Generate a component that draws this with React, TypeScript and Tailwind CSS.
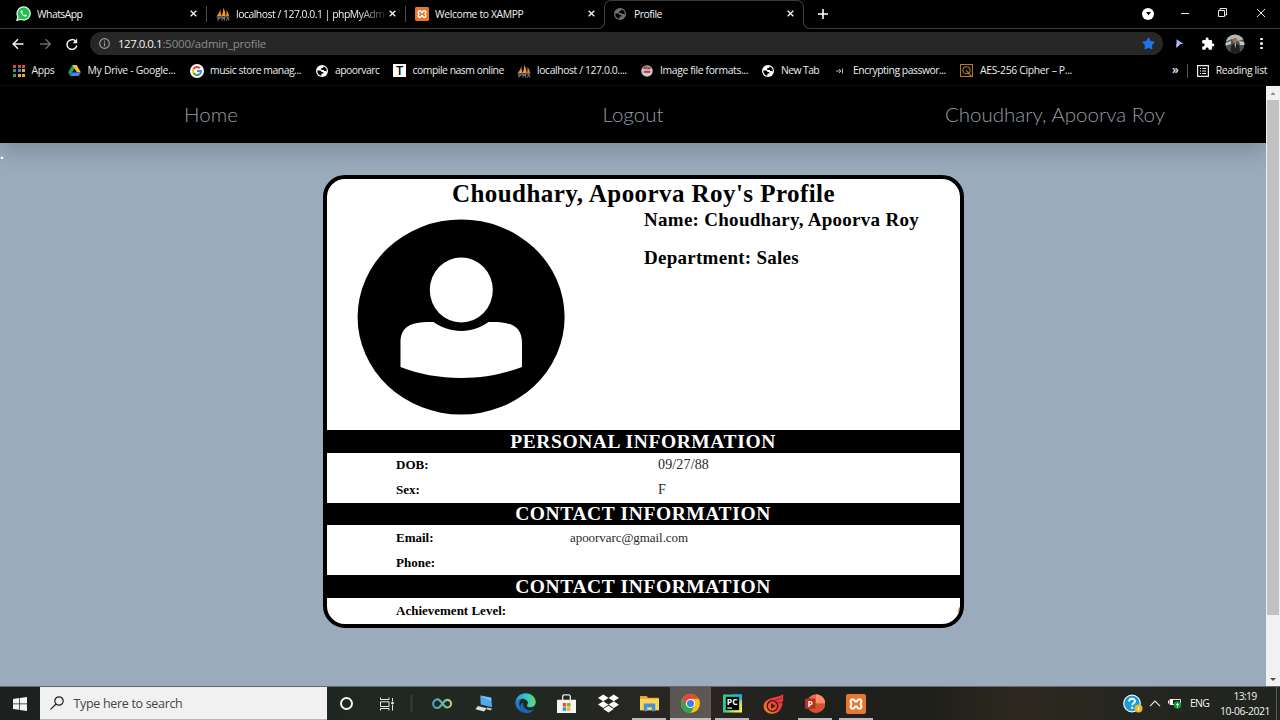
import React from "react";
import { FaDropbox, FaStar } from "react-icons/fa";
import { MdExtension } from "react-icons/md";

type IconProps = { className?: string };

/* ---------- site icons ---------- */

function WhatsAppIcon() {
  return (
    <svg viewBox="0 0 16 16" className="size-[15px] shrink-0">
      <path d="M8.200 1a7 7 0 0 1 0 14c-1.200 0-2.300-.3-3.300-.8L1 15.200l1.100-3.700A7 7 0 0 1 8.200 1z" fill="#1fc14f" stroke="#f2fff5" strokeWidth="1.300" />
      <path d="M5.300 4.600c-.8.8-.7 2 .3 3.500 1.100 1.600 2.400 2.700 3.900 3.100 1 .2 1.900-.2 2.200-1.200l-1.900-1.100-.9.900c-1.100-.5-1.800-1.200-2.300-2.200l.7-.9-.8-1.900z" fill="#fff" />
    </svg>
  );
}

function PmaIcon({ className }: IconProps) {
  return (
    <svg viewBox="0 0 14 14" className={className}>
      <path d="M.8 9C2.800 6.800 3.800 4.800 4.200 2l1 7zM5.200 9C7 6 7.400 3.500 7.200.4 8.800 3.300 9.600 6 9.600 9z" fill="#f29a1e" />
      <path d="M9.900 9c.6-1.700.8-3.500.5-6 1.500 1.800 2.400 3.700 2.700 6z" fill="#e08a1c" />
      <path d="M.6 9.900h12.800M2 9.900v3.800M2 11.700h2v-1.800M6 13.600V10l1.300 2 1.300-2v3.600M10.500 13.600l1.200-3.500 1.300 3.500" fill="none" stroke="#8b8ca6" strokeWidth=".9" />
    </svg>
  );
}

function XamppIcon({ className }: IconProps) {
  return (
    <svg viewBox="0 0 20 20" className={className}>
      <rect width="20" height="20" rx="2" fill="#e8772e" />
      <path
        d="M7 5.200c1.700 0 1.700 2.600 3 2.600s1.300-2.600 3-2.600 2.700 1.300 2.400 2.800c-.2 1-.9 1.400-.9 2s.7 1 .9 2c.3 1.500-.7 2.800-2.400 2.800s-1.700-2.600-3-2.600-1.300 2.600-3 2.600-2.700-1.300-2.400-2.800c.2-1 .9-1.400.9-2s-.7-1-.9-2C4.300 6.500 5.300 5.200 7 5.200z"
        fill="none"
        stroke="#fff"
        strokeWidth="2"
      />
    </svg>
  );
}

function GlobeIcon({ className }: IconProps) {
  return (
    <svg viewBox="0 0 12 12" className={className}>
      <circle cx="6" cy="6" r="6" fill="currentColor" />
      <path
        d="M1.300 5.500h2.500c1 0 1.600.6 1.600 1.400h1.200c.6 0 .8.4.8 1v.6H6.200c-.5 0-.8.3-.8.800v1.400A4.800 4.800 0 0 1 1.300 5.500zM7.400 1.400v.5c0 .7-.5 1-1.100 1-.9 0-1.200.4-1.200 1s.4 1 1 1h1c.6 0 1 .4 1 1h1.500c.6 0 .9.4 1 1A4.800 4.800 0 0 0 7.400 1.400z"
        fill="#000"
      />
    </svg>
  );
}

function AppsIcon() {
  const colors = ["#d34b40", "#d34b40", "#d34b40", "#3f9c56", "#3f7fe0", "#e0b030", "#3f9c56", "#e0b030", "#e0b030"];
  return (
    <span className="grid shrink-0 grid-cols-3 gap-[1.5px]">
      {colors.map((c, i) => (
        <span key={i} className="size-[3px]" style={{ backgroundColor: c }} />
      ))}
    </span>
  );
}

function DriveIcon() {
  return (
    <svg viewBox="0 0 24 21" className="h-[11px] w-[13px] shrink-0">
      <path d="M8 0h8l-8 14-4 7-4-7z" fill="#1fa463" />
      <path d="M8 0h8l8 14h-8z" fill="#fbc31c" />
      <path d="M4 21l4-7h16l-4 7z" fill="#4285f4" />
      <path d="M12 7l4 7H8z" fill="#000" />
    </svg>
  );
}

function GoogleIcon() {
  return (
    <svg viewBox="0 0 28 28" className="size-[14px] shrink-0">
      <circle cx="14" cy="14" r="14" fill="#fff" />
      <g fill="none" strokeWidth="4">
        <path d="M19.800 8.500A8 8 0 0 0 7 10.200" stroke="#ea4335" />
        <path d="M7 10.200a8 8 0 0 0 0 7.600" stroke="#fbbc05" />
        <path d="M7 17.800a8 8 0 0 0 12.500 2" stroke="#34a853" />
        <path d="M19.500 19.800A8 8 0 0 0 22 14.200h-8" stroke="#4285f4" />
      </g>
    </svg>
  );
}

function ImageSiteIcon() {
  return (
    <svg viewBox="0 0 12 12" className="size-[12px] shrink-0">
      <circle cx="6" cy="6" r="5.800" fill="#b4b8c6" />
      <path d="M2.500 1.500h3v3h-3zM6.500 2h3v3h-3zM3 5.500h6v2.300H3z" fill="#c23a2a" />
      <path d="M1.500 8.300L6 10.300l4.500-2M1.200 5h9.600" fill="none" stroke="#f4ece8" strokeWidth=".9" />
      <path d="M5.900 1v3.500" stroke="#445a9c" strokeWidth="1" />
    </svg>
  );
}

function QIcon() {
  return (
    <svg viewBox="0 0 14 14" className="size-[13px] shrink-0" fill="none" stroke="#b57a36" strokeWidth="1.100">
      <path d="M.6.600h12.800v12.800H.6z" />
      <circle cx="7" cy="6.700" r="3.800" />
      <path d="M6.500 6.500l5.500 6.500" strokeWidth="1.200" />
    </svg>
  );
}

/* ---------- browser chrome ---------- */

function CloseIcon() {
  return (
    <svg viewBox="0 0 8 8" className="size-[7px] shrink-0" stroke="#f5f5f5" strokeWidth="1.500">
      <path d="M.8.800l6.400 6.400M7.200.800L.8 7.200" />
    </svg>
  );
}

function Tab({ icon, children, text }: { icon: React.ReactNode; children: React.ReactNode; text: string }) {
  return (
    <div className="flex min-w-0 flex-1 items-center">
      {icon}
      <span className={"pt-px " + text}>{children}</span>
      <span className="ml-auto pr-[9px]">
        <CloseIcon />
      </span>
    </div>
  );
}

function TabStrip() {
  return (
    <div className="flex h-[29px] text-[10.4px] text-[#f1f1f1]">
      <div className="flex w-[598px] shrink-0 border-b border-[#3c3c3c]">
        <div className="flex w-[207px] shrink-0 items-center pl-[16px]">
          <Tab icon={<WhatsAppIcon />} text="ml-[6px] tracking-[-0.53px]">WhatsApp</Tab>
          <span className="h-[16px] w-px bg-[#4a4a4a]" />
        </div>
        <div className="flex w-[199px] shrink-0 items-center pl-[9px]">
          <Tab
            icon={<PmaIcon className="size-[14px] shrink-0" />}
            text="ml-[6px] whitespace-nowrap tracking-[-0.48px] [mask-image:linear-gradient(to_right,#000_82%,rgb(0_0_0/0.15))]"
          >
            localhost / 127.0.0.1 | phpMyAdm
          </Tab>
          <span className="h-[16px] w-px bg-[#4a4a4a]" />
        </div>
        <div className="-mr-[6px] flex w-[198px] shrink-0 items-center pl-[9px]">
          <Tab icon={<XamppIcon className="size-[14px] shrink-0" />} text="ml-[6px] tracking-[-0.38px]">Welcome to XAMPP</Tab>
        </div>
      </div>
      <div className="h-[8px] w-[7px] self-end rounded-br-[7px] border-r border-b border-[#3c3c3c]" />
      <div className="-ml-px flex h-[22px] w-[200px] rounded-t-[7px] border-x border-t border-[#3c3c3c]">
        <div className="flex h-[26px] flex-1 items-center pl-[9px]">
          <Tab icon={<GlobeIcon className="size-[12px] shrink-0 text-[#6b6f75]" />} text="ml-[8px] tracking-[-0.48px]">Profile</Tab>
        </div>
      </div>
      <div className="-ml-px h-[8px] w-[8px] self-end rounded-bl-[7px] border-b border-l border-[#3c3c3c]" />
      <div className="flex flex-1 items-center border-b border-[#3c3c3c]">
        <svg viewBox="0 0 10 10" className="ml-[7px] size-[10px]" stroke="#fff" strokeWidth="1.600">
          <path d="M5 0v10M0 5h10" />
        </svg>
        <div className="ml-auto flex items-center pr-[15px]">
          <span className="mr-[27px] flex size-[12px] items-center justify-center rounded-full bg-white">
            <svg viewBox="0 0 6 4" className="w-[5px]"><path d="M0 0h6L3 4z" fill="#000" /></svg>
          </span>
          <svg viewBox="0 0 84 10" className="-mt-[3px] h-[10px] w-[84px]" fill="none" stroke="#e8e8e8" strokeWidth="1">
            <path d="M0 5.500h8M37.500 2.500h6v6h-6zM39 2.500v-2h6.500v6.500h-2M76 1l8 8M84 1l-8 8" />
          </svg>
        </div>
      </div>
    </div>
  );
}

function Toolbar() {
  return (
    <div className="flex h-[29px] items-center">
      <svg viewBox="0 0 66 12" className="ml-[12px] h-[12px] w-[66px]" fill="none" strokeWidth="1.500">
        <path d="M11.500 6H1.200M6 1.200L1.200 6 6 10.800" stroke="#f5f5f5" />
        <path d="M28 6h10M33.500 1.200L38.300 6l-4.800 4.800" stroke="#6a6a6a" />
        <path d="M63.600 3.200A4.900 4.900 0 1 0 64.800 7.500" stroke="#f5f5f5" />
        <path d="M65.200.6v4.600h-4.600z" fill="#f5f5f5" />
      </svg>
      <div className="ml-[12px] flex h-[23px] w-[1073px] items-center rounded-full bg-[#272727] pr-[8px] pl-[9px] text-[11.5px]">
        <svg viewBox="0 0 12 12" className="size-[11px]" fill="none" stroke="#9aa0a6" strokeWidth="1.200">
          <circle cx="6" cy="6" r="5.300" />
          <path d="M6 5.300v3.600M6 3v1.300" />
        </svg>
        <span className="ml-[8px] tracking-[-0.5px] text-[#f4f4f4]">127.0.0.1</span>
        <span className="ml-[0.5px] tracking-[-0.2px] text-[#8c8c8c]">:5000/admin_profile</span>
        <FaStar className="ml-auto size-[13px] text-[#1f73e8]" />
      </div>
      <svg viewBox="0 0 8 9" className="ml-[13px] h-[9px] w-[8px]">
        <path d="M.5.300L7.500 4.800 4 5.300.5 8.800z" fill="#8fbdf2" />
        <path d="M4 5.300L.5 8.800V5z" fill="#e9b6ec" />
      </svg>
      <MdExtension className="ml-[17px] size-[14px] text-white" />
      <svg viewBox="0 0 20 20" className="ml-[10px] size-[20px]">
        <defs>
          <clipPath id="avatar"><circle cx="10" cy="10" r="9.500" /></clipPath>
        </defs>
        <g clipPath="url(#avatar)">
          <path d="M0 0h20v20H0z" fill="#4c534f" />
          <path d="M0 0h20v5L13 7 7 5 0 8z" fill="#a9bcae" />
          <path d="M0 9l6-2v3l-6 2zM14 7l6 1v3h-5z" fill="#c3c6c6" />
          <path d="M5 20l1.500-9L10 9l4 2 1.500 9z" fill="#1c2022" />
          <circle cx="10" cy="6.500" r="2.500" fill="#9a6e58" />
          <path d="M9.500 9.500h1.500l-.7 5z" fill="#d6dbe2" />
        </g>
      </svg>
      <div className="ml-[15px] flex flex-col gap-[2px]">
        <span className="size-[2.5px] rounded-full bg-white" />
        <span className="size-[2.5px] rounded-full bg-white" />
        <span className="size-[2.5px] rounded-full bg-white" />
      </div>
    </div>
  );
}

function Bookmark({ icon, className, children }: { icon: React.ReactNode; className: string; children: string }) {
  return (
    <div className={"flex shrink-0 items-center whitespace-nowrap " + className}>
      {icon}
      <span>{children}</span>
    </div>
  );
}

function BookmarksBar() {
  return (
    <div className="flex h-[27px] items-center pb-px pl-[13px] text-[10.4px] text-[#ececec]">
      <Bookmark icon={<AppsIcon />} className="w-[55px] gap-[6.5px] tracking-[-0.33px]">Apps</Bookmark>
      <Bookmark icon={<DriveIcon />} className="w-[122px] gap-[6.5px] tracking-[-0.29px]">My Drive - Google...</Bookmark>
      <Bookmark icon={<GoogleIcon />} className="w-[126px] gap-[6px] tracking-[-0.47px]">music store manag...</Bookmark>
      <Bookmark icon={<GlobeIcon className="size-[12px] shrink-0 text-white" />} className="w-[77px] gap-[7px] tracking-[-0.52px]">apoorvarc</Bookmark>
      <Bookmark
        icon={<span className="flex size-[13px] items-center justify-center bg-white font-['Roboto'] text-[12px] font-medium text-black">T</span>}
        className="w-[124px] gap-[6.5px] tracking-[-0.48px]"
      >
        compile nasm online
      </Bookmark>
      <Bookmark icon={<PmaIcon className="size-[14px] shrink-0" />} className="w-[124px] gap-[6px] tracking-[-0.4px]">localhost / 127.0.0....</Bookmark>
      <Bookmark icon={<ImageSiteIcon />} className="w-[121px] gap-[7px] tracking-[-0.38px]">Image file formats...</Bookmark>
      <Bookmark icon={<GlobeIcon className="size-[12px] shrink-0 text-white" />} className="w-[74px] gap-[7px] tracking-[-0.6px]">New Tab</Bookmark>
      <Bookmark
        icon={
          <svg viewBox="0 0 7 6" className="h-[6px] w-[7px]" fill="none" stroke="#b5b5b5">
            <path d="M0 3h5M3 1l2 2-2 2M6.500.500v5" />
          </svg>
        }
        className="w-[124px] gap-[10px] tracking-[-0.47px]"
      >
        Encrypting passwor...
      </Bookmark>
      <Bookmark icon={<QIcon />} className="w-[212px] gap-[7px] tracking-[-0.33px]">AES-256 Cipher – P...</Bookmark>
      <span className="-mt-[3px] text-[12px] leading-none font-semibold">»</span>
      <span className="ml-[8px] h-[14px] w-px bg-[#555]" />
      <svg viewBox="0 0 12 12" className="ml-[9px] size-[12px]" fill="none" stroke="#f0f0f0" strokeWidth="1.200">
        <path d="M.6.600h10.800v10.800H.6zM3 3.500h1M5.200 3.500h4M3 6h1M5.200 6h4M3 8.500h1M5.200 8.500h4" />
      </svg>
      <span className="ml-[7px] tracking-[-0.35px] whitespace-nowrap">Reading list</span>
    </div>
  );
}

/* ---------- page ---------- */

function NavBar() {
  return (
    <nav className="relative flex h-[57px] items-center bg-black font-['Lato'] text-[20.5px] font-light text-[#949ca6] shadow-[0_7px_24px_rgba(0,0,0,0.2)]">
      <a className="flex-1 text-center">Home</a>
      <a className="flex-1 text-center">Logout</a>
      <a className="flex-1 text-center">Choudhary, Apoorva Roy</a>
    </nav>
  );
}

function UserAvatar() {
  return (
    <svg viewBox="0 0 208 196" className="mt-[40px] ml-[30px] h-[196px] w-[209px]">
      <ellipse cx="103.600" cy="98" rx="103.500" ry="97.500" fill="#000" />
      <ellipse cx="103.800" cy="71" rx="31.500" ry="32.500" fill="#fff" />
      <path
        d="M76 103C84 108.500 93 112 103.800 112S123 108.500 131 103C152 102.500 164.500 106 164.500 124V148C146 155 126 159 103.800 159S61 155 43 148V124C43 106 55 102.500 76 103z"
        fill="#fff"
      />
    </svg>
  );
}

function SectionTitle({ children, className }: { children: string; className: string }) {
  return (
    <h2 className={"flex items-center justify-center bg-black text-[19.5px] leading-none font-bold text-white " + className}>
      {children}
    </h2>
  );
}

type RowProps = { label: string; value?: string; className?: string; labelClass?: string; valueClass?: string };

function Row({ label, value, className = "", labelClass = "w-[262px]", valueClass = "" }: RowProps) {
  return (
    <div className={"flex h-[25px] items-center pl-[69.5px] text-[13px] " + className}>
      <span className={"shrink-0 font-bold " + labelClass}>{label}</span>
      <span className={"text-[#2a2a2a] " + valueClass}>{value}</span>
    </div>
  );
}

function ProfileCard() {
  return (
    <section className="mx-auto mt-[32px] h-[453px] w-[641px] overflow-hidden rounded-[22px] border-4 border-black bg-white font-['Liberation_Serif'] text-black">
      <div className="flex h-[251px]">
        <div className="w-[317.500px] shrink-0">
          <UserAvatar />
        </div>
        <div className="flex flex-col">
          <h1 className="-ml-[192px] h-[29px] text-[25px] leading-[30px] font-bold tracking-[0.437px] whitespace-nowrap">
            Choudhary, Apoorva Roy's Profile
          </h1>
          <p className="h-[37.5px] text-[19px] leading-[23px] font-bold tracking-[0.283px] whitespace-nowrap">Name: Choudhary, Apoorva Roy</p>
          <p className="text-[19px] leading-[23px] font-bold tracking-[0.27px]">Department: Sales</p>
        </div>
      </div>
      <SectionTitle className="h-[23px] tracking-[0.6px]">PERSONAL INFORMATION</SectionTitle>
      <Row label="DOB:" value="09/27/88" className="pb-[2px]" valueClass="text-[14px] tracking-[0.15px]" />
      <Row label="Sex:" value="F" className="pb-[2px]" valueClass="text-[14px]" />
      <SectionTitle className="h-[22px] tracking-[0.6px]">CONTACT INFORMATION</SectionTitle>
      <Row label="Email:" value="apoorvarc@gmail.com" labelClass="w-[174px]" valueClass="tracking-[-0.06px]" />
      <Row label="Phone:" />
      <SectionTitle className="h-[23px] tracking-[0.6px]">CONTACT INFORMATION</SectionTitle>
      <Row label="Achievement Level:" value="0" labelClass="w-[562px]" />
    </section>
  );
}

function ScrollBar() {
  return (
    <div className="flex w-[14px] flex-col items-center bg-[#f1f1f1]">
      <svg viewBox="0 0 14 14" className="size-[14px] shrink-0"><path d="M4.500 9h5L7 6z" fill="#8d8d8d" /></svg>
      <div className="h-[515px] w-[12px] bg-[#c1c1c1]" />
      <svg viewBox="0 0 14 14" className="mt-auto size-[14px] shrink-0"><path d="M4 6h6L7 9z" fill="#505050" /></svg>
    </div>
  );
}

/* ---------- taskbar ---------- */

function TaskItem({ children, bar = "", cell = "" }: { children: React.ReactNode; bar?: string; cell?: string }) {
  return (
    <div className={"flex h-full w-[41.35px] shrink-0 flex-col items-center " + cell}>
      <div className="flex flex-1 items-center">{children}</div>
      <span className={"-mt-[2px] h-[2px] " + bar} />
    </div>
  );
}

function InfinityIcon() {
  return (
    <svg viewBox="0 0 22 14" className="w-[21px]" fill="none" strokeWidth="2.200">
      <defs>
        <linearGradient id="inf"><stop stopColor="#4b9fc4" /><stop offset=".5" stopColor="#62b8ae" /><stop offset="1" stopColor="#a8d08a" /></linearGradient>
      </defs>
      <path d="M11 7C9 4 7.700 2.500 5.700 2.500a4.500 4.500 0 0 0 0 9C7.700 11.500 9 10 11 7s3.300-4 5-4a3.900 3.900 0 0 1 0 8C14 11 13 10 11 7z" stroke="url(#inf)" />
    </svg>
  );
}

function ComputerIcon() {
  return (
    <svg viewBox="0 0 20 18" className="w-[19px]">
      <path d="M5.500.5l11.500 2.500 1 10-12-3z" fill="#4fa9ec" />
      <path d="M5.500.5l11.500 2.500.3 3.500z" fill="#7cc4f6" />
      <path d="M3 11.500l9.500 2.500-3 3.500L.5 15z" fill="#d8dde2" />
      <path d="M12.500 12.800l5.500 1.400-1.500 2-4-1z" fill="#b8bfc6" />
    </svg>
  );
}

function EdgeIcon() {
  return (
    <svg viewBox="0 0 24 24" className="w-[21px]">
      <defs>
        <linearGradient id="edgeTop" x1="0" x2="1"><stop stopColor="#2a9fe0" /><stop offset=".55" stopColor="#35c6cf" /><stop offset="1" stopColor="#5fdc62" /></linearGradient>
        <linearGradient id="edgeLow" x1="0" y1="0" x2="1" y2="1"><stop stopColor="#1e8fe0" /><stop offset="1" stopColor="#114a9a" /></linearGradient>
      </defs>
      <path d="M.4 11C1.200 4.600 6 .3 12 .3c7 0 11.700 5 11.700 10 0 4-3 6-6.200 6-2.500 0-4-.8-4-1.800 0-.8 1.200-1.200 1.200-3.200 0-2.700-3-4.800-6.500-4.800-3.800 0-6.500 1.900-7.800 4.500z" fill="url(#edgeTop)" />
      <path d="M.4 11C2 7.500 5 6.400 8 6.500c-2.500 1.300-3.500 4-3 7 .8 5 5.500 9 11 8.800A12 12 0 0 1 .4 11z" fill="url(#edgeLow)" />
      <path d="M9.500 11c-1.200 5 3.200 9 8 8.600 1.800-.2 3-.8 4.500-1.600-1.500 2.500-4 4.300-7 5C9.500 23.500 5.600 18.500 6 14.500c.2-1.700 1.500-3 3.500-3.500z" fill="#1668b8" />
    </svg>
  );
}

function StoreIcon() {
  return (
    <svg viewBox="0 0 20 21" className="w-[19px]">
      <path d="M6 7V2.500A1.500 1.500 0 0 1 7.500 1h5A1.500 1.500 0 0 1 14 2.500V7" fill="none" stroke="#e8e8e8" strokeWidth="1.400" />
      <path d="M0 6h20v13.500A1.500 1.500 0 0 1 18.500 21h-17A1.500 1.500 0 0 1 0 19.500z" fill="#f4f4f4" />
      <path d="M6 9.500h3.700v3.700H6z" fill="#e8502a" />
      <path d="M10.500 9.500h3.700v3.700h-3.700z" fill="#7cb518" />
      <path d="M6 14h3.700v3.700H6z" fill="#1d9fe4" />
      <path d="M10.500 14h3.700v3.700h-3.700z" fill="#f8b50c" />
    </svg>
  );
}

function FolderIcon() {
  return (
    <svg viewBox="0 0 20 17" className="w-[19px]">
      <path d="M0 1h7l1.500 2H20v13H0z" fill="#e9a820" />
      <path d="M0 4h20v12H0z" fill="#fbd35f" />
      <path d="M4 17V9h12v8h-3.500v-4h-5v4z" fill="#3f93d6" />
    </svg>
  );
}

function ChromeIcon() {
  return (
    <svg viewBox="0 0 20 20" className="w-[19px]">
      <circle cx="10" cy="10" r="10" fill="#fbc116" />
      <path d="M1.340 5A10 10 0 0 1 18.660 5H10L5.670 12.500z" fill="#e0483a" />
      <path d="M1.340 5A10 10 0 0 0 10 20l4.330-7.500L10 14l-4.330-1.500z" fill="#2fa552" />
      <circle cx="10" cy="10" r="4.800" fill="#fff" />
      <circle cx="10" cy="10" r="3.700" fill="#3f7de8" />
    </svg>
  );
}

function PyCharmIcon() {
  return (
    <svg viewBox="0 0 20 20" className="w-[19px]">
      <defs>
        <linearGradient id="pc" x1="0" y1="0" x2="1" y2="1"><stop stopColor="#21d789" /><stop offset=".5" stopColor="#2cc7a0" /><stop offset=".75" stopColor="#d7ea45" /><stop offset="1" stopColor="#fcf84a" /></linearGradient>
      </defs>
      <path d="M0 .5h20v19H0z" fill="url(#pc)" />
      <path d="M10 .5h10v6l-5-2z" fill="#18b8d8" />
      <path d="M3 3h14v14H3z" fill="#000" />
      <path d="M4.500 14.800h5" stroke="#fff" strokeWidth="1.200" />
      <text x="4" y="11.300" fontSize="9" fontWeight="700" fontFamily="Open Sans, sans-serif" fill="#fff">PC</text>
    </svg>
  );
}

function FlameIcon() {
  return (
    <svg viewBox="0 0 21 20" className="w-[21px]">
      <defs>
        <linearGradient id="fl" x1="0" y1="1" x2="1" y2="0"><stop stopColor="#f7931e" /><stop offset=".5" stopColor="#ee4035" /><stop offset="1" stopColor="#f0304a" /></linearGradient>
      </defs>
      <path d="M20.500 0c-.8 3 0 5-.5 7l-1.500 2 1 .5c-.3 2.500-1 4.500-3 7-3 3.500-9 4.500-13 1.500C-.5 15-.3 9.500 3.500 6.500 8 3 15 3.500 20.500 0z" fill="url(#fl)" />
      <circle cx="9.500" cy="12" r="5.300" fill="none" stroke="#33201c" strokeWidth="1.300" />
      <path d="M8 9.300l4.500 2.700L8 14.700z" fill="#33201c" />
      <path d="M12 6.500l7-2.500M14.500 9l4-1" stroke="#7d1f1c" strokeWidth=".8" />
    </svg>
  );
}

function PowerPointIcon() {
  return (
    <svg viewBox="0 0 20 19" className="w-[20px]">
      <circle cx="11" cy="9.500" r="9.200" fill="#ed6c47" />
      <path d="M11 .3a9.200 9.200 0 0 1 9.200 9.200H11z" fill="#ff8f6b" />
      <path d="M1.900 9.500h18.300A9.200 9.200 0 0 1 11 18.700 9.200 9.200 0 0 1 1.900 9.500z" fill="#d35230" />
      <rect y="4.500" width="10.500" height="10.500" rx="1" fill="#b7321a" />
      <text x="2.500" y="12.800" fontSize="8.500" fontWeight="700" fontFamily="Open Sans, sans-serif" fill="#fff">P</text>
    </svg>
  );
}

function Taskbar() {
  return (
    <footer className="flex h-[34px] shrink-0 items-stretch border-t border-[#5f6a70] bg-[linear-gradient(to_right,#1c201e_0%,#202822_30%,#232722_45%,#2c2522_55%,#1f211e_62%,#1e1f1a_72%,#2d291e_80%,#25261f_88%,#20231f_100%)] text-[#f2f2f2]">
      <div className="flex w-[40px] items-center justify-center">
        <svg viewBox="0 0 14 14" className="size-[14px]" fill="#f4f4f4">
          <path d="M0 2l6-.9v5.500H0zM6.700 1L14 0v6.600H6.700zM0 7.300h6v5.500L0 12zM6.700 7.300H14v6.600l-7.300-1z" />
        </svg>
      </div>
      <div className="flex w-[287px] items-center border-b border-[#b5b5b5] bg-[#f1f1f1] pl-[10px]">
        <svg viewBox="0 0 14 14" className="size-[14px]" fill="none" stroke="#222" strokeWidth="1.200">
          <circle cx="9" cy="5" r="4.200" />
          <path d="M6 8L.6 13.400" />
        </svg>
        <span className="ml-[9.5px] pt-[2px] text-[12.5px] tracking-[-0.32px] text-[#454545]">Type here to search</span>
      </div>
      <div className="flex w-[39px] items-center justify-center">
        <span className="size-[13px] rounded-full border-2 border-[#f5f5f5]" />
      </div>
      <div className="flex w-[42px] items-center justify-center">
        <svg viewBox="0 0 14 14" className="size-[14px]" fill="none" stroke="#e6e6e6" strokeWidth="1">
          <path d="M.5.500v2h8.500v-2M.5 4.800h8.500v4.700H.5zM.5 13.500v-2h8.500v2M12.500 1v3.500M12.500 7.500v6M11.500 5.500h2v1h-2z" />
        </svg>
      </div>
      <div className="flex w-[14px] items-center pl-[2px]">
        <span className="h-[17px] w-[3px] bg-[#2e3630]" />
      </div>
      <TaskItem><InfinityIcon /></TaskItem>
      <TaskItem><ComputerIcon /></TaskItem>
      <TaskItem><EdgeIcon /></TaskItem>
      <TaskItem><StoreIcon /></TaskItem>
      <TaskItem><FaDropbox className="size-[21px] text-white" /></TaskItem>
      <TaskItem bar="w-[34px] bg-[#bdb9b7]"><FolderIcon /></TaskItem>
      <TaskItem cell="bg-[#5c5654]" bar="w-full bg-[#c4bfbd]"><ChromeIcon /></TaskItem>
      <TaskItem bar="w-[34px] bg-[#bdb9b7]"><PyCharmIcon /></TaskItem>
      <TaskItem><FlameIcon /></TaskItem>
      <TaskItem bar="w-[34px] bg-[#bdb9b7]"><PowerPointIcon /></TaskItem>
      <TaskItem bar="w-[34px] bg-[#bdb9b7]"><XamppIcon className="size-[20px]" /></TaskItem>
      <div className="ml-auto flex items-center">
        <svg viewBox="0 0 20 20" className="size-[20px]">
          <circle cx="9" cy="9.500" r="8.300" fill="#1a9bd7" stroke="#eef6fa" strokeWidth="1.200" />
          <path d="M6.200 7.500c0-3.500 5.800-3.500 5.800-.2 0 2-2.800 2-2.800 4M9.200 12.800v2" fill="none" stroke="#fff" strokeWidth="2" />
          <circle cx="15.500" cy="14.500" r="4" fill="#f0b429" />
          <path d="M15.500 12.500v4" stroke="#fff3d0" strokeWidth="1.300" />
        </svg>
        <svg viewBox="0 0 12 7" className="ml-[6px] w-[12px]" fill="none" stroke="#e6e6e6" strokeWidth="1.200">
          <path d="M1 6.200l5-5 5 5" />
        </svg>
        <svg viewBox="0 0 14 11" className="ml-[7px] h-[11px] w-[14px]">
          <path d="M2 1.500h10.500v5H2z" fill="none" stroke="#e6e6e6" />
          <path d="M2 1.500h3v5H2zM0 2.500h1v3H0z" fill="#fff" />
          <circle cx="9.500" cy="7" r="3.700" fill="#109a3e" />
          <path d="M9.500 5v4.500M8 6.500h3" stroke="#d8ffd8" strokeWidth=".9" />
        </svg>
        <span className="ml-[8px] w-[20px] pt-px text-[10.5px] tracking-[-0.8px]">ENG</span>
        <div className="ml-[10px] flex flex-col items-center text-[10.4px] leading-[15px]">
          <span className="tracking-[-0.7px]">13:19</span>
          <span className="tracking-[-0.43px]">10-06-2021</span>
        </div>
        <span className="ml-[6px] h-[33px] w-[4px] border-l border-[#5a5b57]" />
      </div>
    </footer>
  );
}

export default function App() {
  return (
    <div className="flex h-[720px] w-[1280px] flex-col overflow-hidden bg-black font-['Open_Sans',sans-serif]">
      <TabStrip />
      <Toolbar />
      <BookmarksBar />
      <div className="flex min-h-0 flex-1 border-t border-[#0d0d0d]">
        <main className="min-w-0 flex-1 overflow-hidden bg-[#9aabbc]">
          <NavBar />
          <div className="flex">
            <span className="relative z-10 w-[3px] pt-[3px] font-['Liberation_Serif'] text-[15px] leading-[16px] font-bold text-white">.</span>
            <div className="min-w-0 flex-1 pl-[17px]">
              <ProfileCard />
            </div>
          </div>
        </main>
        <ScrollBar />
      </div>
      <Taskbar />
    </div>
  );
}
